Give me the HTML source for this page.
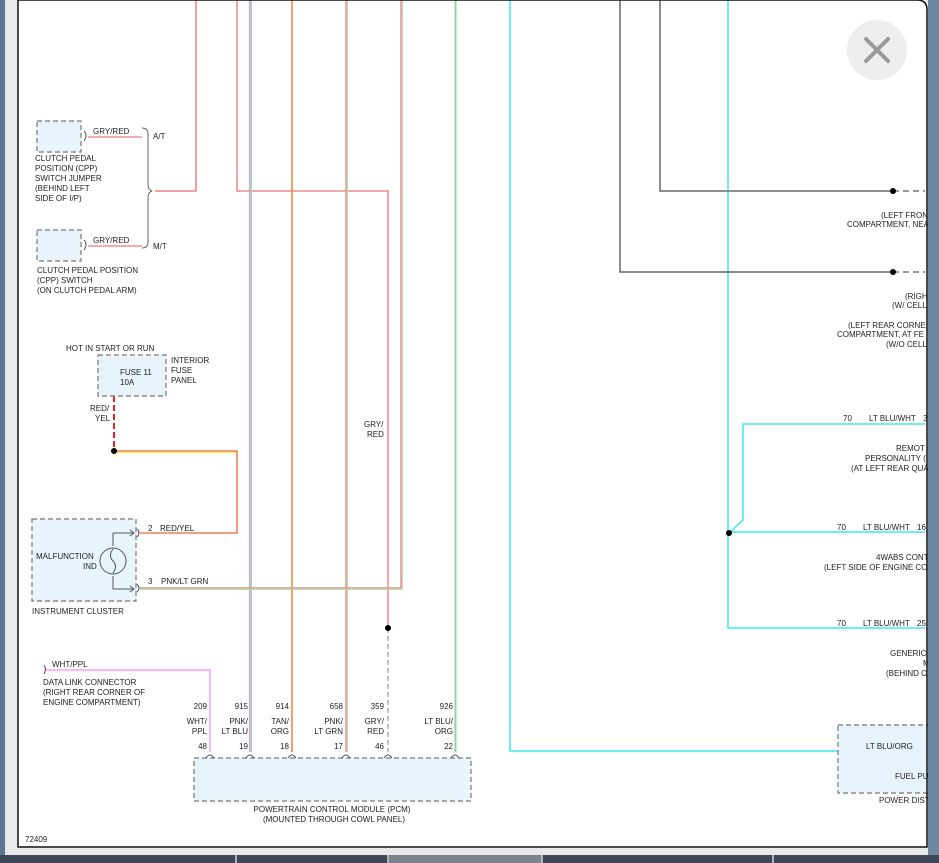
<!DOCTYPE html>
<html><head><meta charset="utf-8"><style>
html,body{margin:0;padding:0;width:939px;height:863px;overflow:hidden;background:#fff}
svg{display:block}
text{font-family:"Liberation Sans",Arial,sans-serif;font-size:8px;fill:#222}
</style></head><body>
<svg width="939" height="863" viewBox="0 0 939 863">
<rect x="0" y="0" width="939" height="863" fill="#e9e9e9"/>
<rect x="0" y="0" width="5" height="863" fill="#5d7590"/>
<path d="M18 0 H917 Q927 0 927 10 V847 H18 Z" fill="#fff"/>

<g fill="none" stroke-width="1.5">
<path d="M196 0 V191 H155" stroke="#f08080"/>
<path d="M237 0 V191 H388 V628" stroke="#f08a8a"/>
<path d="M388 628 V752" stroke="#aaa" stroke-dasharray="5,3"/>
<path d="M250 0 V752" stroke="#f08a9a"/>
<path d="M251.5 0 V752" stroke="#6ee" stroke-width="1"/>
<path d="M292 0 V752" stroke="#e08a40"/>
<path d="M346 0 V752" stroke="#f08a9a"/>
<path d="M347.5 0 V752" stroke="#9e9" stroke-width="1"/>
<path d="M401 0 V588 H140" stroke="#f08a9a"/>
<path d="M402.5 0 V589" stroke="#9e9" stroke-width="1"/>
<path d="M140 589.5 H402" stroke="#9e9" stroke-width="1"/>
<path d="M455 0 V752" stroke="#e0b070" stroke-width="1"/>
<path d="M456 0 V752" stroke="#4ee" stroke-width="1"/>
<path d="M510 0 V751 H925" stroke="#3ee8ee"/>
<path d="M728 0 V628 H925" stroke="#3ee8ee"/>
<path d="M730 532 H925" stroke="#3ee8ee"/>
<path d="M925 424 H743 V520 L730 532" stroke="#3ee8ee"/>
<path d="M660 0 V191 H893" stroke="#666"/>
<path d="M620 0 V272 H893" stroke="#666"/>
<path d="M893 191 H925 M893 272 H925" stroke="#777" stroke-dasharray="6,4"/>
<path d="M88 137 H142 M88 246 H142" stroke="#f09090"/>
<path d="M142 128 Q148 128 148 134 V184 Q148 190 152 191 Q148 192 148 198 V242 Q148 248 142 248" stroke="#666" stroke-width="1"/>
<path d="M114 356 V367 M114 380 V396" stroke="#777" stroke-width="1"/>
<path d="M114 367 Q110 373 114 380" stroke="#777" stroke-width="1"/>
<path d="M114 396 V451" stroke="#e22" stroke-width="2" stroke-dasharray="6,3"/>
<path d="M114 452.3 H236.5" stroke="#ee0" stroke-width="0.8"/>
<path d="M114 451 H237 V533 H140" stroke="#f06040" stroke-width="1.3"/>
<path d="M44 670 H210 V752" stroke="#f070f0" stroke-width="1"/>
</g>
<g fill="#000"><circle cx="114" cy="451" r="3"/><circle cx="388" cy="628" r="3"/><circle cx="893" cy="191" r="3"/><circle cx="893" cy="272" r="3"/><circle cx="729" cy="533" r="3"/><circle cx="114" cy="368" r="1.8"/><circle cx="114" cy="379" r="1.8"/></g>

<g fill="#e8f4fc" stroke="#777" stroke-dasharray="5,3" stroke-width="1.2">
<rect x="37" y="121" width="44" height="31"/>
<rect x="37" y="230" width="44" height="31"/>
<rect x="98" y="355" width="68" height="41"/>
<rect x="32" y="519" width="104" height="82"/>
<rect x="194" y="758" width="277" height="43"/>
<rect x="838" y="725" width="95" height="68"/>
</g>
<g fill="none" stroke="#555" stroke-width="1">
<path d="M84 131 Q88 135 84 141 M84 240 Q88 244 84 250 M137 529 Q141 533 137 537 M137 584 Q141 588 137 592 M44 665 Q47 669 44 674"/>
<path d="M113 533 V546 M113 576 V589 M113 533 H134 M113 589 H134 M130 530 L134 533 L130 536 M130 586 L134 589 L130 592"/>
<circle cx="113" cy="561" r="13"/>
<path d="M113 549 Q108 556 113 561 Q118 566 113 573"/>
<path d="M206 758 Q210 752 214 758 M246 758 Q250 752 254 758 M288 758 Q292 752 296 758 M342 758 Q346 752 350 758 M384 758 Q388 752 392 758 M451 758 Q455 752 459 758"/>
</g>
<circle cx="877" cy="50" r="30" fill="#eee"/>
<path d="M866 39 L888 61 M888 39 L866 61" stroke="#999" stroke-width="4" stroke-linecap="round"/>

<text x="93" y="134">GRY/RED</text><text x="153" y="139">A/T</text>
<text x="35" y="161">CLUTCH PEDAL</text><text x="35" y="171">POSITION (CPP)</text><text x="35" y="181">SWITCH JUMPER</text><text x="35" y="191">(BEHIND LEFT</text><text x="35" y="201">SIDE OF I/P)</text>
<text x="93" y="243">GRY/RED</text><text x="153" y="249">M/T</text>
<text x="37" y="273">CLUTCH PEDAL POSITION</text><text x="37" y="283">(CPP) SWITCH</text><text x="37" y="293">(ON CLUTCH PEDAL ARM)</text>
<text x="66" y="351">HOT IN START OR RUN</text>
<text x="120" y="375">FUSE 11</text><text x="120" y="385">10A</text>
<text x="171" y="363">INTERIOR</text><text x="171" y="373">FUSE</text><text x="171" y="383">PANEL</text>
<text x="90" y="411">RED/</text><text x="95" y="421">YEL</text>
<text x="364" y="427">GRY/</text><text x="367" y="437">RED</text>
<text x="148" y="531">2</text><text x="160" y="531">RED/YEL</text>
<text x="36" y="559">MALFUNCTION</text><text x="83" y="569">IND</text>
<text x="148" y="584">3</text><text x="161" y="584">PNK/LT GRN</text>
<text x="32" y="614">INSTRUMENT CLUSTER</text>
<text x="52" y="667">WHT/PPL</text>
<text x="43" y="685">DATA LINK CONNECTOR</text><text x="43" y="695">(RIGHT REAR CORNER OF</text><text x="43" y="705">ENGINE COMPARTMENT)</text>
<g text-anchor="end">
<text x="207" y="709">209</text><text x="248" y="709">915</text><text x="289" y="709">914</text><text x="343" y="709">658</text><text x="384" y="709">359</text><text x="453" y="709">926</text>
<text x="207" y="724">WHT/</text><text x="207" y="734">PPL</text>
<text x="248" y="724">PNK/</text><text x="248" y="734">LT BLU</text>
<text x="289" y="724">TAN/</text><text x="289" y="734">ORG</text>
<text x="343" y="724">PNK/</text><text x="343" y="734">LT GRN</text>
<text x="384" y="724">GRY/</text><text x="384" y="734">RED</text>
<text x="453" y="724">LT BLU/</text><text x="453" y="734">ORG</text>
<text x="207" y="749">48</text><text x="248" y="749">19</text><text x="289" y="749">18</text><text x="343" y="749">17</text><text x="384" y="749">46</text><text x="453" y="749">22</text>
</g>
<text x="332" y="812" text-anchor="middle">POWERTRAIN CONTROL MODULE (PCM)</text>
<text x="334" y="822" text-anchor="middle">(MOUNTED THROUGH COWL PANEL)</text>
<text x="25" y="842">72409</text>
<text x="881" y="218">(LEFT FRON</text><text x="847" y="227">COMPARTMENT, NEA</text>
<text x="905" y="299">(RIGH</text><text x="892" y="308">(W/ CELL</text>
<text x="848" y="328">(LEFT REAR CORNE</text><text x="837" y="337">COMPARTMENT, AT FE</text><text x="886" y="347">(W/O CELL</text>
<text x="843" y="421">70</text><text x="869" y="421">LT BLU/WHT</text><text x="923" y="421">3</text>
<text x="896" y="451">REMOT</text><text x="865" y="461">PERSONALITY (</text><text x="851" y="471">(AT LEFT REAR QUA</text>
<text x="837" y="530">70</text><text x="863" y="530">LT BLU/WHT</text><text x="917" y="530">16</text>
<text x="876" y="560">4WABS CONT</text><text x="824" y="570">(LEFT SIDE OF ENGINE CO</text>
<text x="837" y="626">70</text><text x="863" y="626">LT BLU/WHT</text><text x="917" y="626">25</text>
<text x="890" y="656">GENERIC</text><text x="923" y="666">M</text><text x="886" y="676">(BEHIND C</text>
<text x="866" y="749">LT BLU/ORG</text><text x="895" y="779">FUEL PU</text><text x="879" y="803">POWER DIST</text>

<rect x="928" y="0" width="11" height="855" fill="#6f86a0"/>
<path d="M18 0 H917 Q927 0 927 10 V847 H18 Z" fill="none" stroke="#111" stroke-width="1.5"/>
<rect x="0" y="855" width="939" height="8" fill="#3d4756"/>
<rect x="389" y="855" width="153" height="8" fill="#7a8590"/>
<g stroke="#cfd4da" stroke-width="1.5"><line x1="236" y1="855" x2="236" y2="863"/><line x1="388" y1="855" x2="388" y2="863"/><line x1="542" y1="855" x2="542" y2="863"/><line x1="773" y1="855" x2="773" y2="863"/></g>
</svg>
</body></html>
